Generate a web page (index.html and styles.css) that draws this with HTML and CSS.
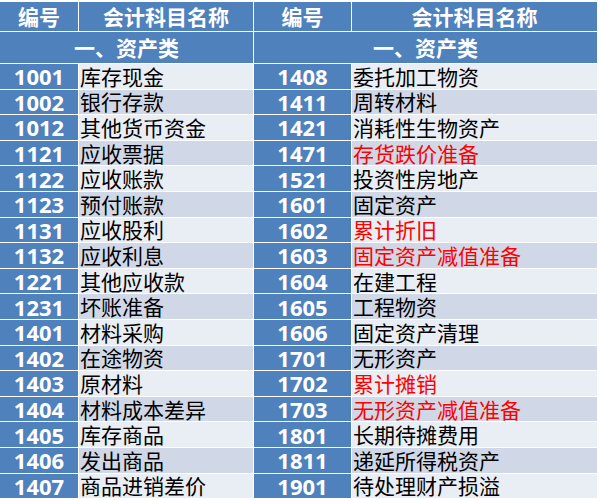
FILE: index.html
```html
<!DOCTYPE html>
<html lang="zh">
<head>
<meta charset="utf-8">
<link rel="stylesheet" href="styles.css">
</head>
<body>
<div class="table">
  <div class="hd">编号</div><div class="hd">会计科目名称</div><div class="hd">编号</div><div class="hd">会计科目名称</div>
  <div class="sub span2">一、资产类</div><div class="sub span2">一、资产类</div>

  <div class="code">1001</div><div class="name a">库存现金</div><div class="code">1408</div><div class="name a">委托加工物资</div>
  <div class="code">1002</div><div class="name b">银行存款</div><div class="code">1411</div><div class="name b">周转材料</div>
  <div class="code">1012</div><div class="name a">其他货币资金</div><div class="code">1421</div><div class="name a">消耗性生物资产</div>
  <div class="code">1121</div><div class="name b">应收票据</div><div class="code">1471</div><div class="name b red">存货跌价准备</div>
  <div class="code">1122</div><div class="name a">应收账款</div><div class="code">1521</div><div class="name a">投资性房地产</div>
  <div class="code">1123</div><div class="name b">预付账款</div><div class="code">1601</div><div class="name b">固定资产</div>
  <div class="code">1131</div><div class="name a">应收股利</div><div class="code">1602</div><div class="name a red">累计折旧</div>
  <div class="code">1132</div><div class="name b">应收利息</div><div class="code">1603</div><div class="name b red">固定资产减值准备</div>
  <div class="code">1221</div><div class="name a">其他应收款</div><div class="code">1604</div><div class="name a">在建工程</div>
  <div class="code">1231</div><div class="name b">坏账准备</div><div class="code">1605</div><div class="name b">工程物资</div>
  <div class="code">1401</div><div class="name a">材料采购</div><div class="code">1606</div><div class="name a">固定资产清理</div>
  <div class="code">1402</div><div class="name b">在途物资</div><div class="code">1701</div><div class="name b">无形资产</div>
  <div class="code">1403</div><div class="name a">原材料</div><div class="code">1702</div><div class="name a red">累计摊销</div>
  <div class="code">1404</div><div class="name b">材料成本差异</div><div class="code">1703</div><div class="name b red">无形资产减值准备</div>
  <div class="code">1405</div><div class="name a">库存商品</div><div class="code">1801</div><div class="name a">长期待摊费用</div>
  <div class="code">1406</div><div class="name b">发出商品</div><div class="code">1811</div><div class="name b">递延所得税资产</div>
  <div class="code">1407</div><div class="name a">商品进销差价</div><div class="code">1901</div><div class="name a">待处理财产损溢</div>
</div>
</body>
</html>
```

FILE: styles.css
```css
html, body {
  margin: 0;
  padding: 0;
  background: #ffffff;
}
body {
  padding-top: 2px;
  font-family: "Noto Sans CJK SC", sans-serif;
}
.table {
  display: grid;
  width: 597px;
  grid-template-columns: 78px 174px 97px 245px;
  grid-template-rows: 29px 31px repeat(17, 24.6px);
  column-gap: 1px;
  row-gap: 1px;
  background: #ffffff;
}
.table > div {
  display: flex;
  align-items: center;
  white-space: nowrap;
}
.hd, .sub {
  background: #4f81bd;
  color: #ffffff;
  font-weight: 700;
  font-size: 21px;
  justify-content: center;
  line-height: 1;
}
.span2 {
  grid-column: span 2;
}
.code {
  background: #4f81bd;
  color: #ffffff;
  font-family: "Noto Sans", "Open Sans", sans-serif;
  font-weight: 700;
  font-size: 22px;
  justify-content: center;
  line-height: 1;
}
.name {
  font-size: 21px;
  color: #000000;
  padding-left: 1px;
  line-height: 1;
}
.a { background: #e9edf4; }
.b { background: #d0d8e8; }
.red { color: #ff0000; }
```
